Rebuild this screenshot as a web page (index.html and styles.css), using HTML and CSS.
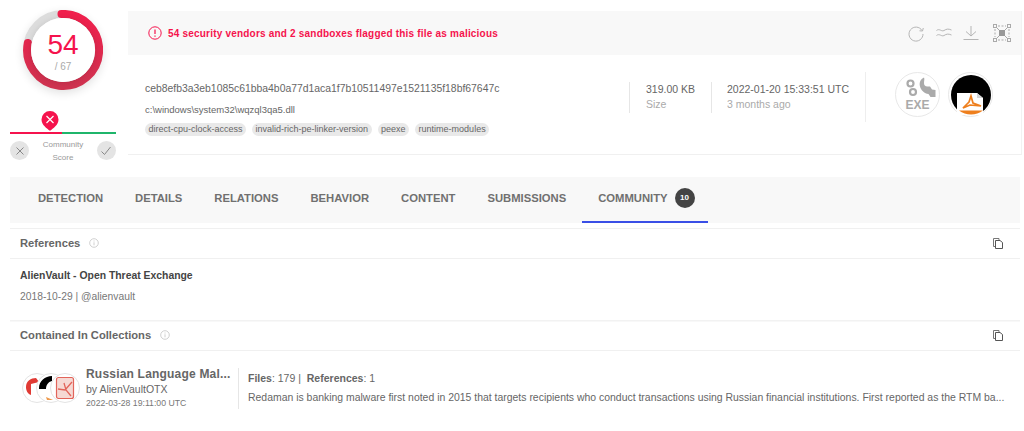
FILE: index.html
```html
<!DOCTYPE html>
<html lang="en">
<head>
<meta charset="utf-8">
<title>VirusTotal</title>
<link rel="stylesheet" href="styles.css">
</head>
<body>
<div class="summary">
  <aside class="score">
    <div class="ring">
      <svg class="ring-svg" width="80" height="80" viewBox="0 0 80 80">
        <defs>
          <linearGradient id="ringGrad" x1="0" y1="0" x2="0" y2="1">
            <stop offset="0" stop-color="#f01f4c"/>
            <stop offset="1" stop-color="#cf3350"/>
          </linearGradient>
        </defs>
        <circle cx="40" cy="40" r="36" fill="none" stroke="#dcdcdc" stroke-width="8"/>
        <path d="M38.500 4 A36 36 0 1 1 4.800 33" fill="none" stroke="url(#ringGrad)" stroke-width="8" stroke-linecap="round"/>
      </svg>
      <div class="ring-inner">
        <div class="ring-num">54</div>
        <div class="ring-total">/ 67</div>
      </div>
    </div>
    <div class="pin-row">
      <svg width="18" height="20" viewBox="0 0 18 20">
        <path d="M9 19.800C6 17.500 .5 14 .5 8.500a8.500 8.500 0 0 1 17 0c0 5.500-5.500 9-8.500 11.300z" fill="#f5134d"/>
        <path d="M5.500 5l7 7M12.500 5l-7 7" stroke="#fff" stroke-width="1.200" fill="none"/>
      </svg>
    </div>
    <div class="vote-bar"><span class="vote-bad"></span><span class="vote-good"></span></div>
    <div class="vote-row">
      <span class="vote-btn">
        <svg width="10" height="10" viewBox="0 0 10 10"><path d="M1.500 1.500l7 7M8.500 1.500l-7 7" stroke="#888" stroke-width="1" fill="none"/></svg>
      </span>
      <span class="vote-label">Community<br>Score</span>
      <span class="vote-btn">
        <svg width="12" height="10" viewBox="0 0 12 10"><path d="M1.500 5.500l3 3L10.500 1" stroke="#888" stroke-width="1" fill="none"/></svg>
      </span>
    </div>
  </aside>
  <section class="card">
    <header class="alert">
      <svg class="alert-icon" width="14" height="14" viewBox="0 0 14 14">
        <circle cx="7" cy="7" r="6.200" fill="none" stroke="#f5134d" stroke-width="1"/>
        <path d="M7 3.500v4.500M7 9.500v1.300" stroke="#f5134d" stroke-width="1.200" fill="none"/>
      </svg>
      <span class="alert-text">54 security vendors and 2 sandboxes flagged this file as malicious</span>
      <span class="actions">
        <svg width="18" height="18" viewBox="0 0 18 18"><path d="M15 6.500A7 7 0 1 0 16 10" fill="none" stroke="#b5b5b5" stroke-width="1"/><path d="M12.500 6.800l3 .2.800-3" fill="none" stroke="#b5b5b5" stroke-width="1"/></svg>
        <svg width="16" height="12" viewBox="0 0 16 12"><path d="M.5 3.500c3-2.500 5 1.500 7.500 0s4-2 7.500-.5M.5 8.500c3-2.500 5 1.500 7.500 0s4-2 7.500-.5" fill="none" stroke="#b5b5b5" stroke-width="1"/></svg>
        <svg width="16" height="16" viewBox="0 0 16 16"><path d="M8 1v10M3 6.500L8 11l5-4.500M.5 14.500h15" fill="none" stroke="#b5b5b5" stroke-width="1"/></svg>
        <svg class="graph" width="18" height="18" viewBox="0 0 18 18"><g fill="none" stroke="#aaa" stroke-width="1"><rect x=".5" y=".5" width="3" height="3"/><rect x="14.500" y=".5" width="3" height="3"/><rect x=".5" y="14.500" width="3" height="3"/><rect x="14.500" y="14.500" width="3" height="3"/><path d="M5 2h8M5 16h8M2 5v8M16 5v8" stroke-dasharray="2 1.500"/><path d="M4 4l10 10M14 4L4 14"/></g><rect x="6" y="6" width="6" height="6" fill="#999"/></svg>
      </span>
    </header>
    <div class="file">
      <div class="file-main">
        <div class="hash">ceb8efb3a3eb1085c61bba4b0a77d1aca1f7b10511497e1521135f18bf67647c</div>
        <div class="path">c:\windows\system32\wqzql3qa5.dll</div>
        <div class="tags">
          <span class="tag">direct-cpu-clock-access</span>
          <span class="tag">invalid-rich-pe-linker-version</span>
          <span class="tag">peexe</span>
          <span class="tag">runtime-modules</span>
        </div>
      </div>
      <div class="stat stat-size"><div class="stat-top">319.00 KB</div><div class="stat-sub">Size</div></div>
      <div class="stat stat-date"><div class="stat-top">2022-01-20 15:33:51 UTC</div><div class="stat-sub">3 months ago</div></div>
      <div class="badges">
        <span class="badge-circle">
          <svg width="40" height="40" viewBox="0 0 40 40">
            <g fill="none" stroke="#aaa" stroke-width="2.200"><circle cx="12.500" cy="8.500" r="3"/><circle cx="15" cy="17" r="3"/></g>
            <path d="M26 2.500c-3.500 1.500-5 5-4 9 1 4 4.500 7 8.500 7.500l2 3h5v-7l-3.500-.5-2-3h-2.500c-2.500 0-3.500-1.500-3.500-3.500 0-2 .8-4 0-5.500z" fill="#aaa"/>
            <text class="exe" x="19.500" y="34">EXE</text>
          </svg>
        </span>
        <span class="badge-circle">
          <svg class="avatar" width="40" height="40" viewBox="0 0 40 40">
            <circle cx="20" cy="20" r="20" fill="#000"/>
            <path d="M6 18h20l6 5v17H6z" fill="#fff"/>
            <path d="M26 18l6 5h-6z" fill="#d5d5d5"/>
            <path d="M20 21l2 7 8 3-11-1-7 3 6-6z" fill="none" stroke="#ee7f1d" stroke-width="1.700"/>
            <path d="M8 35.500h24a20 20 0 0 1-24 0z" fill="#ee7f1d"/>
          </svg>
        </span>
      </div>
    </div>
  </section>
</div>

<nav class="tabs">
  <span class="tab">DETECTION</span>
  <span class="tab">DETAILS</span>
  <span class="tab">RELATIONS</span>
  <span class="tab">BEHAVIOR</span>
  <span class="tab">CONTENT</span>
  <span class="tab">SUBMISSIONS</span>
  <span class="tab tab-active">COMMUNITY<span class="count">10</span></span>
</nav>

<main class="content">
  <div class="sec-head">
    <span class="sec-title">References</span>
    <svg class="info" width="10" height="10" viewBox="0 0 10 10"><circle cx="5" cy="5" r="4.300" fill="none" stroke="#c4c4c4" stroke-width=".8"/><path d="M5 4.300v3M5 2.500v1" stroke="#c4c4c4" stroke-width=".8" fill="none"/></svg>
    <svg class="copy" width="10" height="11" viewBox="0 0 10 11"><path d="M2 8.500H.5V.5h5.500V2" fill="none" stroke="#777" stroke-width="1"/><path d="M2.500 2.500h4.500l2.500 2v6h-7z" fill="none" stroke="#555" stroke-width="1"/></svg>
  </div>
  <div class="ref">
    <div class="ref-title">AlienVault - Open Threat Exchange</div>
    <div class="ref-meta">2018-10-29 | @alienvault</div>
  </div>
  <div class="sec-head">
    <span class="sec-title">Contained In Collections</span>
    <svg class="info" width="10" height="10" viewBox="0 0 10 10"><circle cx="5" cy="5" r="4.300" fill="none" stroke="#c4c4c4" stroke-width=".8"/><path d="M5 4.300v3M5 2.500v1" stroke="#c4c4c4" stroke-width=".8" fill="none"/></svg>
    <svg class="copy" width="10" height="11" viewBox="0 0 10 11"><path d="M2 8.500H.5V.5h5.500V2" fill="none" stroke="#777" stroke-width="1"/><path d="M2.500 2.500h4.500l2.500 2v6h-7z" fill="none" stroke="#555" stroke-width="1"/></svg>
  </div>
  <div class="collection">
    <div class="stack">
      <span class="stack-item">
        <svg width="28" height="28" viewBox="0 0 28 28"><path d="M3 13C3 7 8 4 13 4l3 4-8 2v11C5 20 3 17 3 13z" fill="#e03a34"/></svg>
      </span>
      <span class="stack-item stack-over">
        <svg width="28" height="28" viewBox="0 0 28 28"><path d="M2 14C2 7 8 2 15 2v5c-4 1-6 4-6 8H2z" fill="#000"/><path d="M9 23l7 3-6 0z" fill="#ee9a4d"/></svg>
      </span>
      <span class="stack-item stack-over">
        <svg width="28" height="28" viewBox="0 0 28 28"><rect x="5.500" y="3.500" width="17" height="21" rx="2" fill="#f6d9d4" stroke="#e2645a" stroke-width="1.200"/><path d="M7 15l7 1 7-8M13 9l2 7 5 6" stroke="#e2645a" stroke-width="1.300" fill="none"/></svg>
      </span>
    </div>
    <div class="col-info">
      <div class="col-name">Russian Language Mal...</div>
      <div class="col-by">by AlienVaultOTX</div>
      <div class="col-date">2022-03-28 19:11:00 UTC</div>
    </div>
    <div class="col-body">
      <div class="col-counts"><b>Files</b>: 179 | &nbsp;<b>References</b>: 1</div>
      <div class="col-desc">Redaman is banking malware first noted in 2015 that targets recipients who conduct transactions using Russian financial institutions. First reported as the RTM ba...</div>
    </div>
  </div>
</main>
</body>
</html>
```
FILE: styles.css
```css
* { box-sizing: border-box; }
html, body { margin: 0; padding: 0; }
body {
  background: #fff;
  font-family: "Liberation Sans", Arial, sans-serif;
  color: #666;
  overflow: hidden;
  height: 431px;
}
.summary { display: flex; padding-top: 10px; height: 155px; }
.score {
  width: 128px;
  flex: none;
  padding: 0 12px 0 10px;
  display: flex;
  flex-direction: column;
}
.score > * { flex: none; }
.ring {
  position: relative;
  width: 80px;
  height: 80px;
  margin-left: 13px;
  border-radius: 50%;
  box-shadow: 0 3px 10px rgba(0,0,0,.12);
}
.ring-svg { display: block; }
.ring-inner {
  position: absolute;
  inset: 8px;
  border-radius: 50%;
  background: #fff;
  box-shadow: 0 1px 6px rgba(0,0,0,.12);
  text-align: center;
}
.ring-num { font-size: 28px; line-height: 32px; margin-top: 11px; color: #f5134d; }
.ring-total { font-size: 10px; line-height: 12px; margin-top: 0; color: #aaa; }
.pin-row { display: flex; justify-content: center; height: 20px; margin: 21px 0 0 -28px; padding-left: 1px; }
.pin-row svg { display: block; }
.vote-bar { display: flex; height: 2px; margin-top: 1px; width: 106px; }
.vote-bad { width: 52px; background: #f5134d; }
.vote-good { flex: 1; background: #1fb56b; }
.vote-row { display: flex; justify-content: space-between; align-items: flex-start; margin-top: 5px; }
.vote-btn {
  width: 19px;
  height: 19px;
  margin-top: 2px;
  border-radius: 50%;
  background: #e4e4e4;
  display: flex;
  align-items: center;
  justify-content: center;
}
.vote-label { font-size: 8px; line-height: 12.500px; color: #999; text-align: center; }
.card {
  flex: 1;
  margin: 1px 2px 0 0;
  border-right: 1px solid #f2f2f2;
  border-bottom: 1px solid #f0f0f0;
}
.alert {
  height: 44px;
  background: #f8f8f8;
  display: flex;
  align-items: center;
  padding-left: 20px;
}
.alert-icon { flex: none; }
.alert-text { font-size: 10px; font-weight: 700; color: #f5134d; margin-left: 6px; letter-spacing: .2px; }
.actions { margin-left: auto; display: flex; align-items: center; gap: 11px; padding-right: 10px; }
.actions .graph { margin-left: 3px; }
.file { display: flex; align-items: flex-start; height: 98px; padding-left: 17px; }
.file-main { width: 484px; padding-top: 27px; }
.hash { font-size: 10.400px; line-height: 14px; color: #666; }
.path { font-size: 9.500px; line-height: 12px; color: #666; margin-top: 8px; }
.tags { display: flex; gap: 6px; margin-top: 7px; }
.tag { font-size: 9px; line-height: 13px; height: 13px; padding: 0 3.500px; border-radius: 7px; background: #e9e9e9; color: #666; }
.stat { border-left: 1px solid #e6e6e6; padding-left: 16px; height: 31px; margin-top: 27px; }
.stat-size { width: 82px; }
.stat-date { width: 154px; padding-left: 15px; }
.stat-top { font-size: 10.500px; line-height: 14px; color: #666; }
.stat-sub { font-size: 10.500px; line-height: 14px; margin-top: 1px; color: #aaa; }
.badges {
  display: flex;
  gap: 8px;
  border-left: 1px solid #eee;
  height: 50px;
  padding-left: 29px;
  align-items: flex-start;
  margin-top: 17px;
}
.badge-circle {
  width: 45px;
  height: 45px;
  border-radius: 50%;
  border: 1px solid #e8e8e8;
  background: #fff;
  display: flex;
  align-items: center;
  justify-content: center;
}
.badge-circle svg { display: block; }
.exe { font-size: 12px; font-weight: 700; fill: #aaa; text-anchor: middle; font-family: "Liberation Sans", Arial, sans-serif; }
.tabs {
  display: flex;
  height: 46px;
  margin: 22px 4px 0 10px;
  padding-left: 12px;
  background: #f8f8f8;
}
.tab {
  display: flex;
  align-items: center;
  padding: 0 16px 4px;
  font-size: 11.250px;
  font-weight: 700;
  color: #707070;
  height: 46px;
}
.tab-active { border-bottom: 2px solid #3a4fe6; width: 126px; padding-bottom: 2px; flex: none; }
.count {
  width: 20px;
  height: 20px;
  margin-left: 7px;
  flex: none;
  border-radius: 50%;
  background: #444;
  color: #fff;
  font-size: 8px;
  text-align: center;
  line-height: 20px;
}
.content { margin: 5px 4px 0 10px; border-top: 1px solid #f0f0f0; }
.sec-head {
  display: flex;
  align-items: center;
  height: 30px;
  padding: 0 17px 1px 10px;
  border-bottom: 1px solid #f0f0f0;
}
.sec-title { font-size: 11.200px; font-weight: 700; color: #666; }
.info { margin-left: 9px; }
.copy { margin-left: auto; }
.ref { height: 62px; padding: 10px 10px 0; border-bottom: 1px solid #f2f2f2; box-shadow: 0 1px 0 #f8f8f8; }
.ref-title { font-size: 10.400px; font-weight: 700; color: #444; line-height: 13px; }
.ref-meta { font-size: 10.300px; line-height: 13px; margin-top: 8px; color: #777; }
.collection { display: flex; align-items: center; padding: 16px 0 0 12px; }
.stack { display: flex; width: 64px; flex: none; }
.stack-item {
  width: 30px;
  height: 30px;
  flex: none;
  border-radius: 50%;
  border: 1px solid #e4e4e4;
  background: #fff;
  display: flex;
  align-items: center;
  justify-content: center;
  overflow: hidden;
}
.stack-over { margin-left: -16px; }
.col-info { width: 152px; flex: none; }
.col-name { font-size: 12px; font-weight: 700; line-height: 14px; color: #666; letter-spacing: .2px; }
.col-by { font-size: 10.500px; line-height: 14px; margin-top: 1px; color: #666; }
.col-date { font-size: 8.700px; line-height: 12px; margin-top: 1px; color: #777; }
.col-body { flex: 1; min-width: 0; border-left: 1px solid #e6e6e6; padding: 4px 5px 3px 9px; height: 41px; }
.col-counts { font-size: 10.500px; line-height: 13px; color: #666; }
.col-counts b { font-weight: 700; }
.col-desc { font-size: 10.450px; line-height: 13px; margin-top: 6px; color: #666; white-space: nowrap; }
```
